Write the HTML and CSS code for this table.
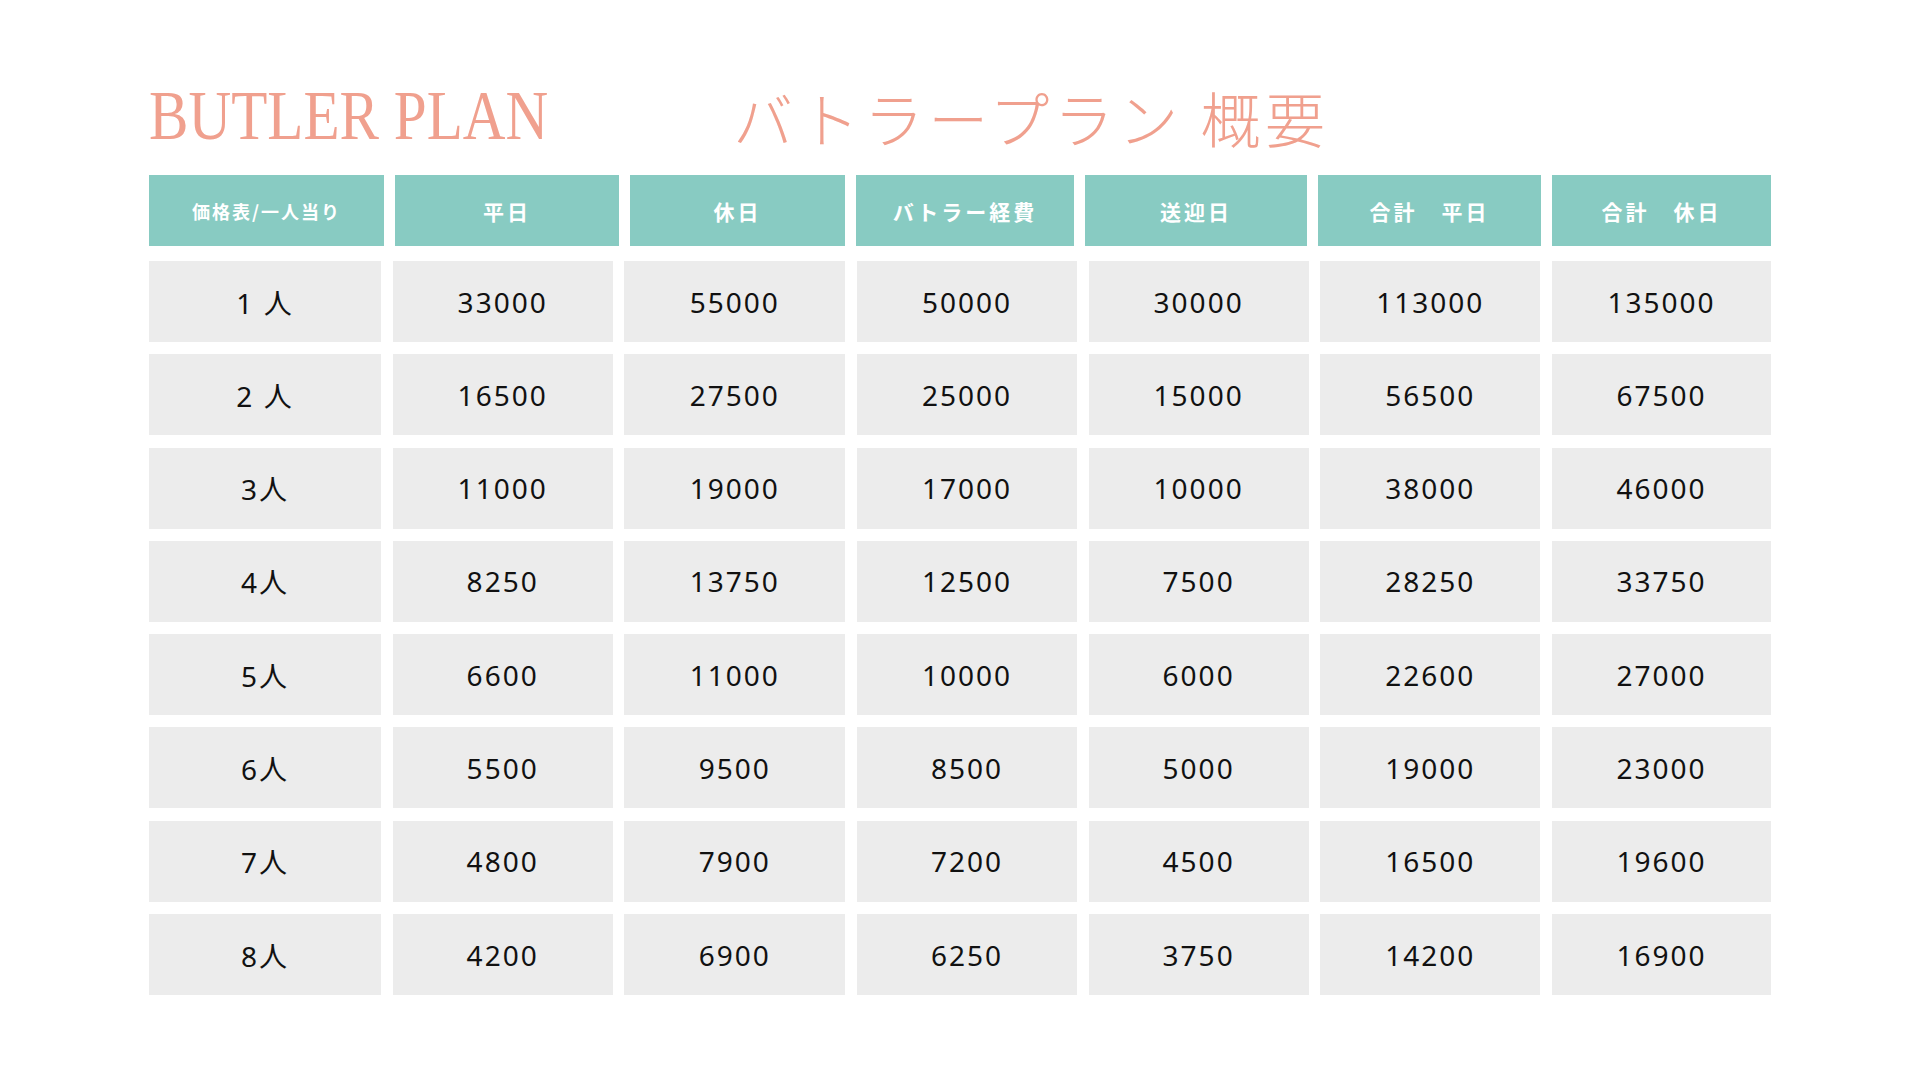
FILE: index.html
```html
<!DOCTYPE html>
<html lang="ja">
<head>
  <meta charset="UTF-8" />
  <meta name="viewport" content="width=device-width, initial-scale=1.0"/>
  <title>バトラープラン 概要</title>
  <link rel="stylesheet" href="styles.css">
</head>
<body>

  <!-- Title -->
  <header class="title-row">
    <h1 class="title-en">BUTLER PLAN</h1>
    <h2 class="title-ja">バトラープラン 概要</h2>
  </header>

  <!-- Price table -->
  <div class="price-head">
    <div class="head-cell small">価格表/一人当り</div>
    <div class="head-cell">平日</div>
    <div class="head-cell">休日</div>
    <div class="head-cell">バトラー経費</div>
    <div class="head-cell">送迎日</div>
    <div class="head-cell">合計　平日</div>
    <div class="head-cell">合計　休日</div>
  </div>

  <div class="price-body">
    <div class="cell">1 人</div><div class="cell">33000</div><div class="cell">55000</div><div class="cell">50000</div><div class="cell">30000</div><div class="cell">113000</div><div class="cell">135000</div>
    <div class="cell">2 人</div><div class="cell">16500</div><div class="cell">27500</div><div class="cell">25000</div><div class="cell">15000</div><div class="cell">56500</div><div class="cell">67500</div>
    <div class="cell">3人</div><div class="cell">11000</div><div class="cell">19000</div><div class="cell">17000</div><div class="cell">10000</div><div class="cell">38000</div><div class="cell">46000</div>
    <div class="cell">4人</div><div class="cell">8250</div><div class="cell">13750</div><div class="cell">12500</div><div class="cell">7500</div><div class="cell">28250</div><div class="cell">33750</div>
    <div class="cell">5人</div><div class="cell">6600</div><div class="cell">11000</div><div class="cell">10000</div><div class="cell">6000</div><div class="cell">22600</div><div class="cell">27000</div>
    <div class="cell">6人</div><div class="cell">5500</div><div class="cell">9500</div><div class="cell">8500</div><div class="cell">5000</div><div class="cell">19000</div><div class="cell">23000</div>
    <div class="cell">7人</div><div class="cell">4800</div><div class="cell">7900</div><div class="cell">7200</div><div class="cell">4500</div><div class="cell">16500</div><div class="cell">19600</div>
    <div class="cell">8人</div><div class="cell">4200</div><div class="cell">6900</div><div class="cell">6250</div><div class="cell">3750</div><div class="cell">14200</div><div class="cell">16900</div>
  </div>

</body>
</html>
```

FILE: styles.css
```css
body {
  margin: 0;
  padding: 81px 0 0 149px;
  background: #ffffff;
  font-family: "Noto Sans", "Noto Sans CJK JP", sans-serif;
  width: 1622px;
}
.title-row {
  display: flex;
  align-items: flex-start;
  height: 70px;
}
.title-en {
  margin: 0;
  width: 584px;
  font-family: "Liberation Serif", serif;
  font-weight: normal;
  font-size: 70px;
  line-height: 1;
  color: #f0a08e;
  white-space: nowrap;
  transform: scaleX(0.845);
  transform-origin: left top;
}
.title-ja {
  margin: 6px 0 0 0;
  font-family: "Noto Sans CJK JP", sans-serif;
  font-weight: 300;
  font-size: 60px;
  line-height: 1;
  letter-spacing: 4.5px;
  color: #f0a08e;
  white-space: nowrap;
}
.price-head {
  display: grid;
  grid-template-columns: 235px 224px 215px 218px 222px 223px 219px;
  column-gap: 11px;
  margin-top: 24px;
}
.head-cell {
  height: 71px;
  background: #88cbc2;
  color: #ffffff;
  font-family: "Noto Sans CJK JP", sans-serif;
  font-weight: bold;
  font-size: 21px;
  letter-spacing: 3px;
  display: flex;
  align-items: center;
  justify-content: center;
  white-space: nowrap;
}
.head-cell.small {
  font-size: 18px;
  letter-spacing: 2px;
}
.price-body {
  display: grid;
  grid-template-columns: 232px 220px 221px 220px 220px 220px 219px;
  grid-auto-rows: 81px;
  column-gap: 11.67px;
  row-gap: 12.3px;
  margin-top: 15px;
}
.cell {
  background: #ececec;
  color: #111111;
  font-size: 28px;
  letter-spacing: 2px;
  display: flex;
  align-items: center;
  justify-content: center;
  white-space: nowrap;
}
```
